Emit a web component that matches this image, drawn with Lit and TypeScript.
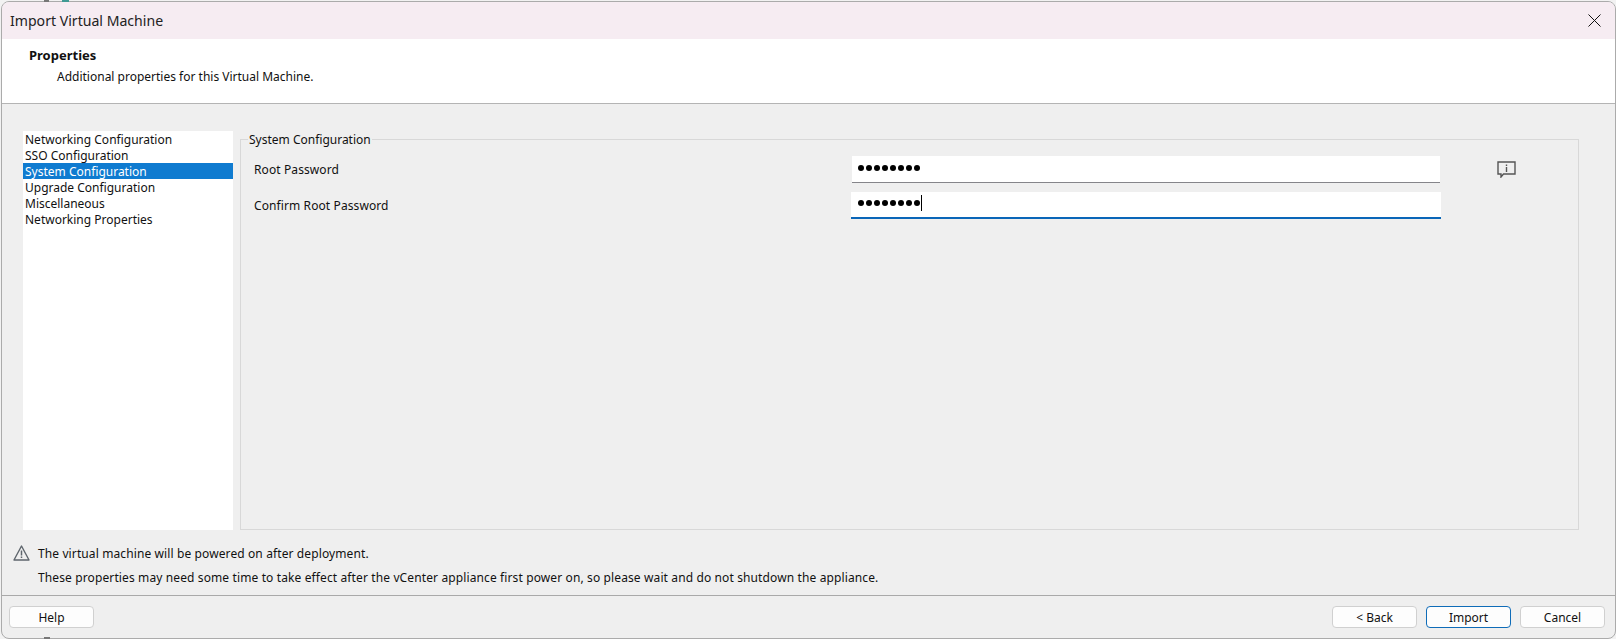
import { LitElement, html, css } from "lit";
import { customElement } from "lit/decorators.js";

@customElement("app-root")
export class AppRoot extends LitElement {
  static styles = css`
    :host { display: block; position: relative; width: 1616px; height: 639px; overflow: hidden; background: #f2f2f2; font-family: "Noto Sans", "Open Sans", sans-serif; font-size: 12px; color: #111; }
    .mark { position: absolute; height: 2px; }
    .m1 { left: 62px; top: 0; width: 7px; background: #3f9a94; }
    .m2 { left: 44px; top: 0; width: 5px; background: #777; }
    .m3 { left: 44px; top: 637px; width: 6px; background: #777; }
    .dialog { box-sizing: border-box; width: 1615px; height: 638px; margin: 1px 0 0 1px; border: 1px solid #ababab; border-radius: 8px; background: #efefef; overflow: hidden; display: flex; flex-direction: column; }
    .title { height: 37px; flex: none; background: #f6ecf2; display: flex; align-items: center; justify-content: space-between; padding: 0 14px 0 8px; }
    .title span { font-size: 14.1px; color: #222; }
    .title svg { display: block; }
    .head { height: 65px; flex: none; box-sizing: border-box; background: #fff; border-bottom: 1px solid #b4b4b4; padding: 8px 0 0 27px; line-height: 18px; }
    .head b { display: block; font-weight: 700; font-size: 13px; line-height: 17px; margin-bottom: 4px; }
    .head p { margin: 0 0 0 28px; }
    .main { flex: none; height: 434px; display: flex; padding: 27px 36px 0 21px; gap: 7px; box-sizing: border-box; }
    .list { width: 210px; height: 399px; background: #fff; flex: none; }
    .item { height: 16px; line-height: 16px; padding-left: 2px; white-space: nowrap; }
    .item span { position: relative; top: 1px; }
    .item.sel { background: #0f7bd0; color: #fff; }
    .group { flex: 1; height: 391px; margin-top: 8px; border: 1px solid #d8d8d8; box-sizing: border-box; position: relative; padding: 16px 0 0 13px; }
    .legend { position: absolute; left: 7px; top: -8px; background: #efefef; padding: 0 1px; line-height: 16px; }
    .row { display: flex; align-items: center; height: 27px; margin-bottom: 9px; }
    .row label { width: 598px; flex: none; letter-spacing: 0.1px; }
    .input { width: 588px; height: 27px; box-sizing: border-box; background: #fff; border-bottom: 1px solid #85858a; display: flex; align-items: center; padding: 0 0 2px 6px; }
    .input.focus { width: 590px; margin-left: -1px; padding-left: 7px; padding-bottom: 3px; border-bottom: 2px solid #0a66b8; }
    .dots { display: flex; gap: 2px; }
    .dots i { width: 6px; height: 6px; border-radius: 50%; background: #000; display: block; }
    .caret { width: 1px; height: 16px; background: #000; margin-left: 0.5px; }
    .info { margin-left: 57px; display: block; flex: none; }
    .notes { height: 57px; flex: none; padding: 0 0 0 11px; }
    .n1 { display: flex; align-items: center; height: 24px; gap: 8px; margin-top: 3px; letter-spacing: 0.11px; }
    .n2 { margin: 1px 0 0 25px; height: 24px; line-height: 24px; white-space: nowrap; letter-spacing: 0.12px; }
    .foot { flex: 1; border-top: 1px solid #a9a9a9; display: flex; justify-content: space-between; padding: 10px 10px 0 7px; }
    .btns { display: flex; gap: 9px; }
    .btn { box-sizing: border-box; width: 85px; height: 22px; background: #fdfdfd; border: 1px solid #d0d0d0; border-radius: 4px; display: flex; align-items: center; justify-content: center; font-size: 12px; color: #111; }
    .btn.def { border-color: #0f6cb8; }
  `;
  render() {
    const items = ["Networking Configuration", "SSO Configuration", "System Configuration", "Upgrade Configuration", "Miscellaneous", "Networking Properties"];
    const dots = html`<div class="dots">${Array.from({ length: 8 }, () => html`<i></i>`)}</div>`;
    return html`
      <div class="dialog">
        <div class="title">
          <span>Import Virtual Machine</span>
          <svg width="13" height="13" viewBox="0 0 13 13"><path d="M.5.5l12 12M12.5.5l-12 12" stroke="#111" stroke-width="1" fill="none"/></svg>
        </div>
        <div class="head"><b>Properties</b><p>Additional properties for this Virtual Machine.</p></div>
        <div class="main">
          <div class="list">${items.map((t, i) => html`<div class="item ${i === 2 ? "sel" : ""}"><span>${t}</span></div>`)}</div>
          <div class="group">
            <div class="legend">System Configuration</div>
            <div class="row"><label>Root Password</label><div class="input">${dots}</div>
              <svg class="info" width="19" height="17" viewBox="0 0 19 17"><path d="M1 1h17v12H6.5L4 16v-3H1z" fill="none" stroke="#555" stroke-width="1.4"/><path d="M9.5 3.5v1.5M9.5 6v5" stroke="#555" stroke-width="1.4"/></svg>
            </div>
            <div class="row"><label>Confirm Root Password</label><div class="input focus">${dots}<div class="caret"></div></div></div>
          </div>
        </div>
        <div class="notes">
          <div class="n1">
            <svg width="17" height="16" viewBox="0 0 17 16"><path d="M8.5 1L16 15H1z" fill="none" stroke="#5f666d" stroke-width="1.4" stroke-linejoin="round"/><path d="M8.5 5.5v5M8.5 11.5v1.5" stroke="#5f666d" stroke-width="1.5"/></svg>
            <span>The virtual machine will be powered on after deployment.</span>
          </div>
          <p class="n2">These properties may need some time to take effect after the vCenter appliance first power on, so please wait and do not shutdown the appliance.</p>
        </div>
        <div class="foot">
          <div class="btn">Help</div>
          <div class="btns"><div class="btn">&lt; Back</div><div class="btn def">Import</div><div class="btn">Cancel</div></div>
        </div>
      </div>
      <div class="mark m1"></div><div class="mark m2"></div><div class="mark m3"></div>`;
  }
}
